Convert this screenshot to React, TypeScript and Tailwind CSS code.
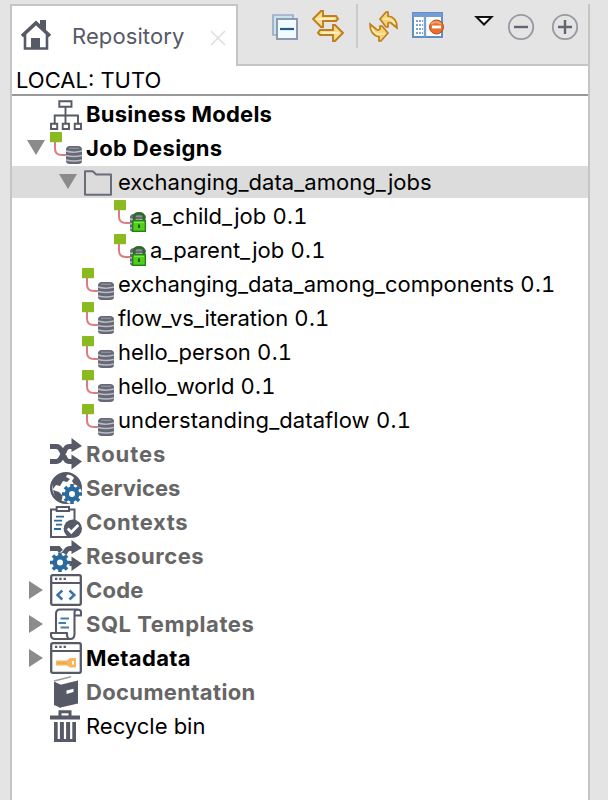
import type { ReactNode } from 'react';

const INK = '#565966';
const BLUE = '#2b6a9e';

function Icon({ children, className = 'size-8' }: { children: ReactNode; className?: string }) {
  return (
    <svg viewBox="0 0 32 32" className={`${className} shrink-0`} fill="none">
      {children}
    </svg>
  );
}

function Gear({ cx, cy }: { cx: number; cy: number }) {
  return (
    <g transform={`translate(${cx} ${cy})`}>
      <circle r="10" fill="#fff" />
      {[0, 45, 90, 135].map((a) => (
        <path key={a} d="M0-10V-6M0 6V10" stroke={BLUE} strokeWidth="3.600" transform={`rotate(${a})`} />
      ))}
      <circle r="5.200" stroke={BLUE} strokeWidth="4.400" fill="#fff" />
    </g>
  );
}

function Stack() {
  return (
    <g>
      <path d="M16 17.500Q16 14 20 14H28Q32 14 32 17.500V29Q32 32 28 32H20Q16 32 16 29Z" fill="#666975" />
      <path d="M19 16.300H29" stroke="#8b8e98" strokeWidth="1.500" />
      <path d="M16 19Q24 21.300 32 19M16 23.500Q24 25.700 32 23.500M16 28Q24 30.200 32 28" stroke="#b9bdc7" strokeWidth="1.500" />
    </g>
  );
}

function JobIcon({ locked = false }: { locked?: boolean }) {
  return (
    <Icon>
      <path d="M5 10V16.500Q5 23 12 23H16.500" stroke="#dc7c7e" strokeWidth="2" />
      <rect width="12" height="10.300" rx=".7" fill="#8aba20" />
      <Stack />
      {locked && (
        <g>
          <path d="M20.300 21V17Q20.300 13.300 25 13.300T29.700 17V21" stroke="#2b6b24" strokeWidth="2.600" />
          <rect x="18.700" y="20.700" width="12.700" height="10.600" fill="#50cf1a" stroke="#24801b" strokeWidth="1.400" />
          <path d="M20 22.300H30" stroke="#8ceb4c" />
          <path d="M25 24.500V28" stroke="#225b19" strokeWidth="2" />
        </g>
      )}
    </Icon>
  );
}

const windowFrame = (
  <g stroke={INK}>
    <rect x="1.200" y="1.200" width="29.600" height="29.600" rx="1.500" strokeWidth="2.300" fill="#fff" />
    <path d="M1 9H31" strokeWidth="2" />
    <path d="M5 4.900H16" strokeWidth="2.200" strokeDasharray="2.300 2" />
  </g>
);

const icons: Record<string, ReactNode> = {
  models: (
    <Icon>
      <g stroke={INK} strokeWidth="1.900">
        <path d="M9.300 3.300H21.500V8.800H9.300ZM15.500 9V25M4.700 25V17.500H28V25" />
        <path d="M1 25.700H7.200V31H1ZM12.700 25.700H19V31H12.700ZM24.700 25.700H31V31H24.700Z" fill="#fff" />
      </g>
    </Icon>
  ),
  job: <JobIcon />,
  locked: <JobIcon locked />,
  folder: (
    <Icon>
      <path d="M3 28.800V5.300H10.700L14.200 8.600H29V28.800Z" stroke="#696c79" strokeWidth="2" strokeLinejoin="round" />
    </Icon>
  ),
  routes: (
    <Icon>
      <path d="M0 8.500H6.500Q9.500 8.500 11.500 13L14.500 19Q16 23.500 19 23.500H24M0 23.500H6.500Q9.500 23.500 11.500 19L14.500 13Q16 8.500 19 8.500H24" stroke={INK} strokeWidth="5" />
      <path d="M21.500 0L32 8L21.500 14ZM21.500 16.500L32 23.500L21.500 31.500Z" fill={INK} />
    </Icon>
  ),
  services: (
    <Icon>
      <circle cx="16" cy="16" r="14.800" fill="#fff" stroke={INK} strokeWidth="2.400" />
      <path d="M3 8L8 3L18 1L16 5L20 7L17 10L13 9L10 14L6 13L3 17ZM21 2L30 9L31 17L25 14L22 9L24 6ZM3 18L9 20L13 24L11 30L5 26Z" fill={INK} />
      <Gear cx={22} cy={22} />
    </Icon>
  ),
  contexts: (
    <Icon>
      <path d="M6 3.500H1V31H21M19 3.500H24.500V15" stroke={INK} strokeWidth="2" />
      <path d="M6.700 1H19V5H6.700Z" stroke={INK} strokeWidth="2" />
      <path d="M6 10.700H14M4 14.700H12M6 18.700H12M4 23H11" stroke={BLUE} strokeWidth="1.800" />
      <circle cx="22.800" cy="22.800" r="9.200" fill={INK} />
      <path d="M17.700 22.500L21.300 26.300L28.300 19" stroke="#fff" strokeWidth="2.700" />
    </Icon>
  ),
  resources: (
    <Icon>
      <path d="M0 8.500H8.500L11 11.500M13.500 14.500L17 9.500Q18 8.500 20 8.500H24M16 23.500H24" stroke={INK} strokeWidth="5" />
      <path d="M21.500 0L32 8L21.500 14ZM21.500 16.500L32 23.500L21.500 31Z" fill={INK} />
      <Gear cx={10} cy={22.5} />
    </Icon>
  ),
  code: (
    <Icon>
      {windowFrame}
      <path d="M12.300 16.500L7.500 21L12.300 25.500M19.500 16.500L24.300 21L19.500 25.500" stroke="#3974a5" strokeWidth="2.500" />
    </Icon>
  ),
  sql: (
    <Icon>
      <path d="M10 1.500H27Q31 1.500 31 4.500V7.500H24.500V26Q24.500 31 20 31H5Q1 31 1 27V25H17V28Q18 31 20 31M10 1.500Q6 1.500 6 6V24M24.500 8V5Q24.500 2 27 1.500" stroke={INK} strokeWidth="2.100" strokeLinejoin="round" />
      <path d="M10.500 10.500H19M8.500 15H16M10.500 19.500H19" stroke="#477eac" strokeWidth="1.800" />
    </Icon>
  ),
  metadata: (
    <Icon>
      {windowFrame}
      <path d="M6 18.500H17L20 16H26V25.500H20L17 23.500H6Z" fill="#f4b75b" />
      <path d="M7 21H17M9 20V22M13 20V22" stroke="#eda03a" />
      <path d="M23 19V22.500" stroke="#fff" strokeWidth="2" />
    </Icon>
  ),
  documentation: (
    <Icon>
      <path d="M4 5.500L10.500 8.500V31.800L4 29Z" fill={INK} />
      <path d="M9.500 9L28 4.500V27.500L9.500 31.800Z" fill={INK} />
      <path d="M5 5.500L21 1.500L26.500 4L10 8Z" fill="#fff" />
      <path d="M4 5L21 .8" stroke="#9a9ca5" strokeWidth="1.400" />
      <path d="M16.500 14.500L23.500 12.700V16L16.500 18Z" fill="#fff" />
    </Icon>
  ),
  trash: (
    <Icon>
      <path d="M10 6V1.700H20V6" stroke={INK} strokeWidth="3" />
      <path d="M0 5.500H30V9.500H0ZM4 12H26V32H4Z" fill={INK} />
      <path d="M8.800 12V29M15 12V29M21.200 12V29" stroke="#fff" strokeWidth="2.200" />
    </Icon>
  ),
};

type Row = {
  label: string;
  version?: string;
  icon: string;
  style: string;
  indent?: string;
  open?: boolean;
  closed?: boolean;
  selected?: boolean;
};

const bold = 'font-bold text-black';
const muted = 'font-bold text-[#666666]';
const plain = 'text-black';

const rows: Row[] = [
  { label: 'Business Models', icon: 'models', style: `${bold} tracking-[0.25px]` },
  { label: 'Job Designs', icon: 'job', style: `${bold} tracking-[0.35px]`, open: true },
  { label: 'exchanging_data_among_jobs', icon: 'folder', style: `${plain} tracking-[0.04px]`, indent: 'pl-8', open: true, selected: true },
  { label: 'a_child_job', version: '0.1', icon: 'locked', style: plain, indent: 'pl-16' },
  { label: 'a_parent_job', version: '0.1', icon: 'locked', style: plain, indent: 'pl-16' },
  { label: 'exchanging_data_among_components', version: '0.1', icon: 'job', style: plain, indent: 'pl-8' },
  { label: 'flow_vs_iteration', version: '0.1', icon: 'job', style: `${plain} tracking-[-0.1px]`, indent: 'pl-8' },
  { label: 'hello_person', version: '0.1', icon: 'job', style: plain, indent: 'pl-8' },
  { label: 'hello_world', version: '0.1', icon: 'job', style: `${plain} tracking-[-0.15px]`, indent: 'pl-8' },
  { label: 'understanding_dataflow', version: '0.1', icon: 'job', style: `${plain} tracking-[0.08px]`, indent: 'pl-8' },
  { label: 'Routes', icon: 'routes', style: `${muted} tracking-[0.95px]` },
  { label: 'Services', icon: 'services', style: muted },
  { label: 'Contexts', icon: 'contexts', style: `${muted} tracking-[0.6px]` },
  { label: 'Resources', icon: 'resources', style: `${muted} tracking-[0.5px]` },
  { label: 'Code', icon: 'code', style: `${muted} tracking-[0.2px]`, closed: true },
  { label: 'SQL Templates', icon: 'sql', style: `${muted} tracking-[0.55px]`, closed: true },
  { label: 'Metadata', icon: 'metadata', style: `${bold} tracking-[0.35px]`, closed: true },
  { label: 'Documentation', icon: 'documentation', style: `${muted} tracking-[0.35px]` },
  { label: 'Recycle bin', icon: 'trash', style: plain },
];

function TreeRow({ row }: { row: Row }) {
  return (
    <div className={`h-8 ${row.selected ? 'bg-[#dcdcdc]' : ''}`}>
      <div className={`flex h-8 items-center ${row.indent ?? ''}`}>
        <div className="w-[38px] shrink-0 pl-[15px]">
          {(row.open || row.closed) && (
            <svg width="18" height="18" viewBox="0 0 18 18" fill="#8b8b8b">
              <path d={row.open ? 'M0 1H18L9 16Z' : 'M2 0L16 9L2 18Z'} />
            </svg>
          )}
        </div>
        {icons[row.icon]}
        <span className={`ml-1 whitespace-pre leading-8 ${row.style}`}>
          {row.label}
          {row.version && <span className="tabular-nums tracking-[0.3px]"> {row.version}</span>}
        </span>
      </div>
    </div>
  );
}

function Toolbar() {
  return (
    <div className="flex h-[66px] w-[352px] items-start border-b-2 border-[#c5c5c5] bg-[#e4e4e4]">
      <svg width="26" height="26" viewBox="0 0 26 26" className="mt-3.5 ml-[34px]">
        <path d="M1 1H21V5H5V21H1Z" fill="#c9e3ef" stroke="#9dacc2" strokeWidth="1.700" />
        <path d="M5 5H25V25H5Z" fill="#f1fbfe" stroke="#8d9ab3" strokeWidth="2" />
        <path d="M8 15H22" stroke="#205c8a" strokeWidth="2.200" />
      </svg>
      <svg width="32" height="32" viewBox="0 0 32 32" className="mt-2.5 ml-3.5" fill="#f9dc91" stroke="#bd7e1d" strokeWidth="1.900">
        <path d="M1 9L9 1H11V6H24L26 9L24 11H11V17H9Z" />
        <path d="M31 23L23 15H21V20H8L6 23L8 25H21V31H23Z" />
        <path d="M4 9H22M10 23H27" stroke="#fff0bd" />
      </svg>
      <div className="mt-1 ml-3 h-11 w-0.5 bg-[#cbcbcb]" />
      <svg width="30" height="32" viewBox="0 0 30 32" className="mt-[11px] ml-[11px]" fill="#f7d374" stroke="#bd7e1d" strokeWidth="1.700">
        <path d="M11 8L17 1H19V5Q28 6 28 17L22 12Q20 11 19 12V16H17Z" />
        <path d="M19 22L12 30H10V26Q1 24 1 13L7 18Q9 20 11 18V15H13Z" />
        <path d="M14 8H20Q24 9 26 13M3 17Q5 23 10 23H16" stroke="#ffedb0" fill="none" />
      </svg>
      <svg width="32" height="26" viewBox="0 0 32 26" className="mt-3 ml-[13px]">
        <rect x="1" y="1" width="29" height="24" fill="#fff" stroke="#608fc6" strokeWidth="2" />
        <path d="M1 3H30" stroke="#739dd4" strokeWidth="4" />
        <path d="M13 4V25" stroke="#79a0d2" strokeWidth="2.400" />
        <path d="M4 9H11M4 13H11M4 17H11M4 21H11" stroke="#5984bf" strokeWidth="1.300" strokeDasharray="2 1" />
        <circle cx="24.500" cy="15" r="7" fill="#e6702c" stroke="#b64b19" />
        <path d="M19 12Q24 8 29 12" stroke="#f2a077" strokeWidth="2" fill="none" />
        <path d="M20 15H29" stroke="#fff" strokeWidth="2.800" />
      </svg>
      <svg width="20" height="12" viewBox="0 0 20 12" className="mt-[15px] ml-[30px]">
        <path d="M2.500 2L10 9.500L17.500 2Z" fill="#fff" stroke="#111" strokeWidth="2" />
      </svg>
      {['M7 14H21', 'M7 14H21M14 7V21'].map((d, i) => (
        <svg key={d} width="28" height="28" viewBox="0 0 28 28" className={`mt-[13px] ${i ? 'ml-4' : 'ml-[13px]'}`} fill="none">
          <circle cx="14" cy="14" r="12.200" stroke="#9698a2" strokeWidth="1.800" />
          <path d={d} stroke="#626571" strokeWidth="2.400" />
        </svg>
      ))}
    </div>
  );
}

export default function App() {
  return (
    <div className="flex h-[800px] w-[608px] flex-col overflow-hidden bg-[#e4e4e4] pt-1 pr-[18px] pl-2.5 font-['Inter','Liberation_Sans',sans-serif] text-[22px]">
      <div className="flex min-h-0 flex-1 flex-col border-x-2 border-[#c5c5c5]">
        <header className="-mt-1 flex h-[66px] shrink-0">
          <div className="mt-1 flex h-[62px] w-[226px] shrink-0 border-t-2 border-r-2 border-[#c5c5c5] bg-white">
            <Icon className="mt-[13px] ml-2 size-8">
              <path d="M2 17L16 4L30 17" stroke={INK} strokeWidth="3.600" />
              <path d="M5 15V29.500H27V15" stroke={INK} strokeWidth="2.600" />
              <path d="M20 4V1H26V12L20 7ZM11 30V19H20V30Z" fill={INK} />
            </Icon>
            <span className="ml-5 w-[115px] shrink-0 leading-[60px] whitespace-nowrap text-[#565966] tracking-[0.1px]">Repository</span>
            <svg width="18" height="18" viewBox="0 0 18 18" className="mt-[23px] ml-[22px] shrink-0">
              <path d="M2 2L16 16M16 2L2 16" stroke="#dedede" strokeWidth="1.500" />
            </svg>
          </div>
          <Toolbar />
        </header>
        <div className="h-[30px] shrink-0 border-b-2 border-[#999999] bg-white pl-1 leading-7 text-black">LOCAL: TUTO</div>
        <main className="flex flex-1 flex-col gap-0.5 bg-white pt-0.5">
          {rows.map((row) => (
            <TreeRow key={row.label} row={row} />
          ))}
        </main>
      </div>
    </div>
  );
}
